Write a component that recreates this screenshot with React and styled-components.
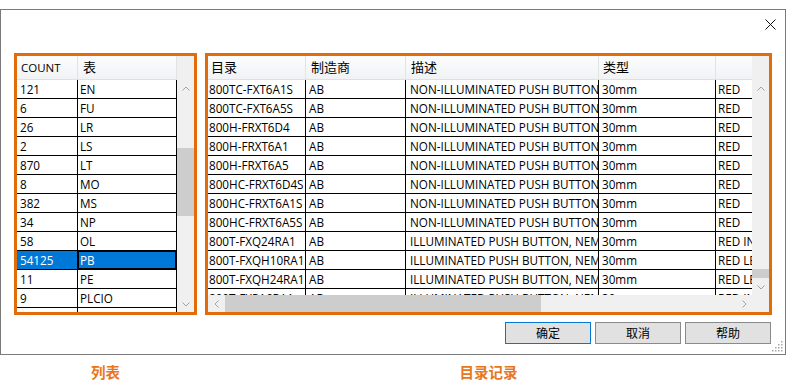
import React from "react";
import styled, { createGlobalStyle, css } from "styled-components";

const ORANGE = "#e36c0a";
const SB_BG = "#f0f0f0";

const Global = createGlobalStyle`
  html, body { margin: 0; padding: 0; background: #fff; }
  body { font-family: "Open Sans", "Noto Sans CJK SC", sans-serif; color: #000; }
`;

const Page = styled.div`
  width: 786px;
  height: 390px;
  display: flex;
  flex-direction: column;
  overflow: hidden;
`;

const Dialog = styled.div`
  position: relative;
  margin-top: 9px;
  box-sizing: border-box;
  width: 786px;
  height: 346px;
  border: 1px solid #7a7a7a;
  display: flex;
  flex-direction: column;
`;

const TitleBar = styled.div`
  box-sizing: border-box;
  height: 43px;
  display: flex;
  justify-content: flex-end;
  align-items: flex-start;
  padding: 9px 9px 0 0;
`;

const CloseBtn = styled.div`
  width: 11px;
  height: 11px;
  display: flex;
`;

const Panels = styled.div`
  display: flex;
  gap: 8px;
  padding-left: 13px;
`;

const Frame = styled.div`
  box-sizing: border-box;
  width: ${(p) => p.$w}px;
  height: 262px;
  border: 3px solid ${ORANGE};
  display: flex;
  flex-direction: ${(p) => (p.$col ? "column" : "row")};
  overflow: hidden;
`;

const Table = styled.div`
  display: flex;
  flex-direction: column;
  width: ${(p) => p.$w}px;
  height: ${(p) => p.$h}px;
  overflow: hidden;
  flex: none;
`;

const HeaderRow = styled.div`
  box-sizing: border-box;
  height: 24px;
  display: flex;
  flex: none;
  background: linear-gradient(#fdfdfd, #f0f2f5);
  border-bottom: 1px solid #e0e0e0;
`;

const HeaderCell = styled.div`
  box-sizing: border-box;
  flex: none;
  width: ${(p) => p.$w}px;
  padding-left: ${(p) => p.$pad}px;
  border-right: 1px solid #e3e3e3;
  font-size: ${(p) => (p.$cjk ? "13px" : "11.5px")};
  line-height: 23px;
  white-space: nowrap;
  overflow: hidden;
`;

const Row = styled.div`
  box-sizing: border-box;
  height: 19px;
  display: flex;
  flex: none;
  border-bottom: 1px solid #000;
`;

const Cell = styled.div`
  box-sizing: border-box;
  flex: none;
  width: ${(p) => p.$w}px;
  padding-left: ${(p) => p.$pad}px;
  border-right: 1px solid #000;
  font-size: 11.7px;
  line-height: 18px;
  white-space: nowrap;
  overflow: hidden;
  ${(p) =>
    p.$selected &&
    css`
      background: #0078d7;
      color: #fff;
    `}
  ${(p) =>
    p.$focus &&
    css`
      box-shadow: inset 0 0 0 1px #000;
    `}
`;

const VScroll = styled.div`
  width: 17px;
  height: ${(p) => p.$h}px;
  flex: none;
  background: ${SB_BG};
  display: flex;
  flex-direction: column;
`;

const HeadFill = styled.div`
  height: 24px;
  flex: none;
`;

const ArrowBtn = styled.div`
  width: 17px;
  height: 17px;
  flex: none;
  display: flex;
  align-items: center;
  justify-content: center;
`;

const VTrack = styled.div`
  flex: 1;
  display: flex;
  flex-direction: column;
`;

const VThumb = styled.div`
  margin-top: ${(p) => p.$top}px;
  height: ${(p) => p.$size}px;
  background: #cdcdcd;
  flex: none;
`;

const BottomBar = styled.div`
  display: flex;
  height: 17px;
  flex: none;
`;

const HScroll = styled.div`
  width: ${(p) => p.$w}px;
  height: 17px;
  background: ${SB_BG};
  display: flex;
  flex: none;
`;

const HTrack = styled.div`
  flex: 1;
  display: flex;
`;

const HThumb = styled.div`
  margin-left: ${(p) => p.$left}px;
  width: ${(p) => p.$size}px;
  background: #cdcdcd;
  flex: none;
`;

const Corner = styled.div`
  width: 17px;
  height: 17px;
  background: ${SB_BG};
  flex: none;
`;

const TopArea = styled.div`
  display: flex;
  height: 239px;
  flex: none;
`;

const ButtonRow = styled.div`
  display: flex;
  justify-content: flex-end;
  gap: 4px;
  margin-top: 7px;
  padding-right: 14px;
`;

const DlgButton = styled.button`
  box-sizing: border-box;
  width: 86px;
  height: 22px;
  margin: 0;
  padding: 0;
  background: #e1e1e1;
  border: 1px solid ${(p) => (p.$default ? "#0078d7" : "#8a8a8a")};
  font-family: "Noto Sans CJK SC", sans-serif;
  font-size: 12px;
  line-height: 20px;
  color: #000;
`;

const Grip = styled.div`
  position: absolute;
  right: 2px;
  bottom: 2px;
  width: 11px;
  height: 11px;
  display: flex;
`;

const Captions = styled.div`
  display: flex;
  gap: 8px;
  padding-left: 14px;
  margin-top: 7px;
`;

const Caption = styled.div`
  width: ${(p) => p.$w}px;
  text-align: center;
  color: #e8761e;
  font-family: "Noto Sans CJK SC", sans-serif;
  font-weight: 700;
  font-size: 14.5px;
  line-height: 20px;
`;

const Chevron = ({ dir }) => {
  const rot = { up: 0, down: 180, left: -90, right: 90 }[dir];
  return (
    <svg width="8" height="8" viewBox="0 0 8 8" style={{ transform: `rotate(${rot}deg)` }}>
      <polyline points="0.5,5.5 4,2 7.5,5.5" fill="none" stroke="#a3a3a3" strokeWidth="1" />
    </svg>
  );
};

const leftCols = [
  { w: 61, pad: 3, hpad: 4, title: "COUNT" },
  { w: 99, pad: 2, hpad: 5, title: "表", cjk: true },
];

const leftRows = [
  ["121", "EN"], ["6", "FU"], ["26", "LR"], ["2", "LS"], ["870", "LT"], ["8", "MO"],
  ["382", "MS"], ["34", "NP"], ["58", "OL"], ["54125", "PB"], ["11", "PE"], ["9", "PLCIO"], ["3", "PS"],
];

const rightCols = [
  { w: 98, pad: 1, hpad: 3, title: "目录" },
  { w: 100, pad: 3, hpad: 5, title: "制造商" },
  { w: 193, pad: 4, hpad: 5, title: "描述" },
  { w: 117, pad: 3, hpad: 4, title: "类型" },
  { w: 120, pad: 2, hpad: 4, title: "" },
];

const NON = "NON-ILLUMINATED PUSH BUTTON";
const ILL = "ILLUMINATED PUSH BUTTON, NEMA 4/13";
const rightRows = [
  ["800TC-FXT6A1S", "AB", NON, "30mm", "RED"],
  ["800TC-FXT6A5S", "AB", NON, "30mm", "RED"],
  ["800H-FRXT6D4", "AB", NON, "30mm", "RED"],
  ["800H-FRXT6A1", "AB", NON, "30mm", "RED"],
  ["800H-FRXT6A5", "AB", NON, "30mm", "RED"],
  ["800HC-FRXT6D4S", "AB", NON, "30mm", "RED"],
  ["800HC-FRXT6A1S", "AB", NON, "30mm", "RED"],
  ["800HC-FRXT6A5S", "AB", NON, "30mm", "RED"],
  ["800T-FXQ24RA1", "AB", ILL, "30mm", "RED INCANDESCENT"],
  ["800T-FXQH10RA1", "AB", ILL, "30mm", "RED LED"],
  ["800T-FXQH24RA1", "AB", ILL, "30mm", "RED LED"],
  ["800T-FXP16RA1", "AB", ILL, "30mm", "RED INCANDESCENT"],
];

export default function App() {
  return (
    <Page>
      <Global />
      <Dialog>
        <TitleBar>
          <CloseBtn>
            <svg width="11" height="11" viewBox="0 0 11 11">
              <path d="M0.5 0.5 L10.5 10.5 M10.5 0.5 L0.5 10.5" stroke="#111" strokeWidth="1" fill="none" />
            </svg>
          </CloseBtn>
        </TitleBar>

        <Panels>
          <Frame $w={183}>
            <Table $w={160} $h={256}>
              <HeaderRow>
                {leftCols.map((c) => (
                  <HeaderCell key={c.title} $w={c.w} $pad={c.hpad} $cjk={c.cjk}>
                    {c.title}
                  </HeaderCell>
                ))}
              </HeaderRow>
              {leftRows.map((r) => {
                const sel = r[0] === "54125";
                return (
                  <Row key={r[0] + r[1]}>
                    <Cell $w={leftCols[0].w} $pad={leftCols[0].pad} $selected={sel}>
                      {r[0]}
                    </Cell>
                    <Cell $w={leftCols[1].w} $pad={leftCols[1].pad} $selected={sel} $focus={sel}>
                      {r[1]}
                    </Cell>
                  </Row>
                );
              })}
            </Table>
            <VScroll $h={256}>
              <HeadFill />
              <ArrowBtn><Chevron dir="up" /></ArrowBtn>
              <VTrack>
                <VThumb $top={51} $size={68} />
              </VTrack>
              <ArrowBtn><Chevron dir="down" /></ArrowBtn>
            </VScroll>
          </Frame>

          <Frame $w={567} $col>
            <TopArea>
              <Table $w={544} $h={239}>
                <HeaderRow>
                  {rightCols.map((c, i) => (
                    <HeaderCell key={i} $w={c.w} $pad={c.hpad} $cjk>
                      {c.title}
                    </HeaderCell>
                  ))}
                </HeaderRow>
                {rightRows.map((r) => (
                  <Row key={r[0]}>
                    {r.map((v, i) => (
                      <Cell key={i} $w={rightCols[i].w} $pad={rightCols[i].pad}>
                        {v}
                      </Cell>
                    ))}
                  </Row>
                ))}
              </Table>
              <VScroll $h={239}>
                <HeadFill />
                <ArrowBtn><Chevron dir="up" /></ArrowBtn>
                <VTrack>
                  <VThumb $top={172} $size={9} />
                </VTrack>
                <ArrowBtn><Chevron dir="down" /></ArrowBtn>
              </VScroll>
            </TopArea>
            <BottomBar>
              <HScroll $w={544}>
                <ArrowBtn><Chevron dir="left" /></ArrowBtn>
                <HTrack>
                  <HThumb $left={0} $size={316} />
                </HTrack>
                <ArrowBtn><Chevron dir="right" /></ArrowBtn>
              </HScroll>
              <Corner />
            </BottomBar>
          </Frame>
        </Panels>

        <ButtonRow>
          <DlgButton $default>确定</DlgButton>
          <DlgButton>取消</DlgButton>
          <DlgButton>帮助</DlgButton>
        </ButtonRow>

        <Grip>
          <svg width="11" height="11" viewBox="0 0 11 11">
            {[[9, 1], [9, 4], [6, 4], [9, 7], [6, 7], [3, 7], [9, 10], [6, 10], [3, 10], [0, 10]].map(([x, y], i) => (
              <rect key={i} x={x} y={y - 1} width="1.5" height="1.5" fill="#a8a8a8" />
            ))}
          </svg>
        </Grip>
      </Dialog>

      <Captions>
        <Caption $w={183}>列表</Caption>
        <Caption $w={567}>目录记录</Caption>
      </Captions>
    </Page>
  );
}
